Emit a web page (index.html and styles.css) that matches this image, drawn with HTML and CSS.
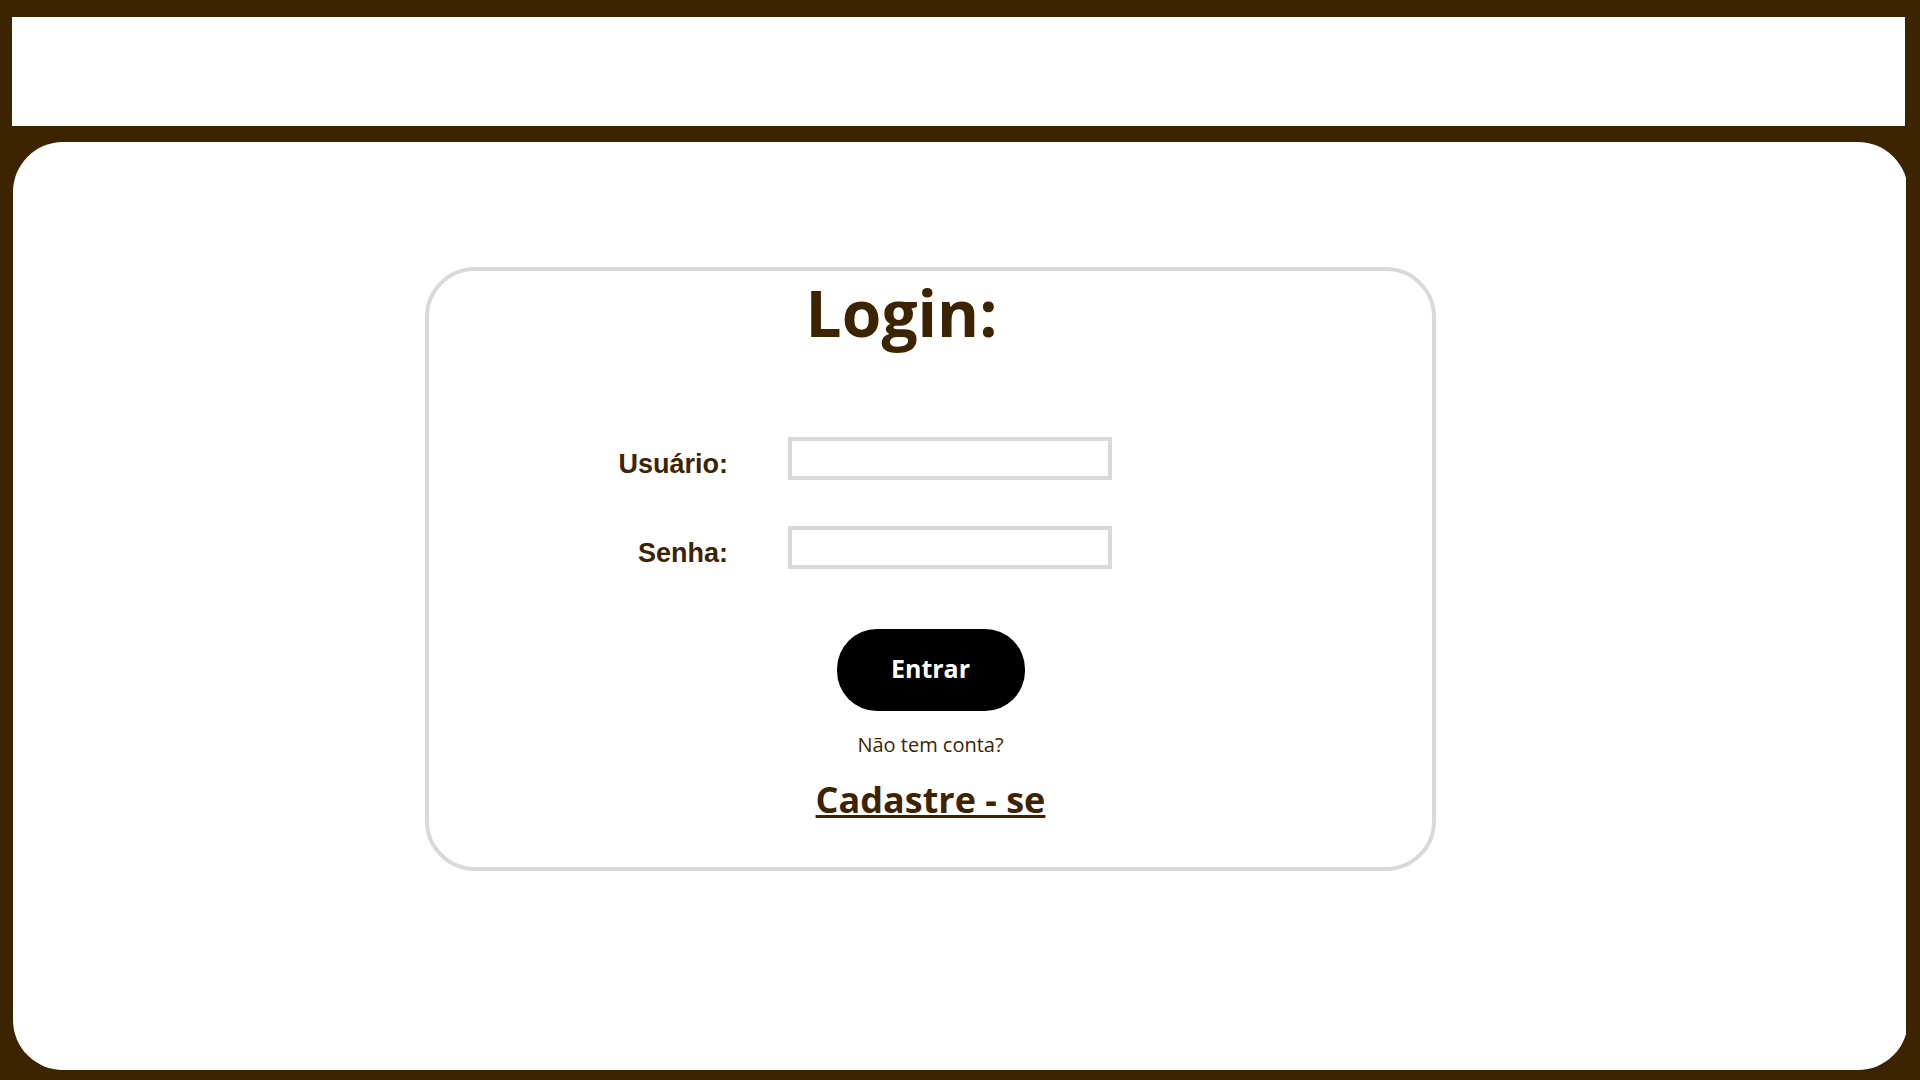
FILE: index.html
```html
<!DOCTYPE html>
<html lang="pt-BR">
<head>
<meta charset="utf-8">
<meta name="viewport" content="width=device-width, initial-scale=1">
<title>Login</title>
<link rel="stylesheet" href="styles.css">
</head>
<body>
<header class="topbar"></header>
<main class="content">
  <div class="panel">
    <form class="card">
      <h1 class="title">Login:</h1>
      <div class="fields">
        <label class="label" for="usuario">Usuário:</label>
        <input class="input" id="usuario" type="text">
        <label class="label" for="senha">Senha:</label>
        <input class="input" id="senha" type="password">
      </div>
      <button class="submit" type="button">Entrar</button>
      <p class="hint">Não tem conta?</p>
      <a class="register" href="#">Cadastre - se</a>
    </form>
  </div>
</main>
</body>
</html>
```

FILE: styles.css
```css
* {
  box-sizing: border-box;
}

body {
  display: flex;
  flex-direction: column;
  gap: 16px;
  min-height: 100vh;
  margin: 0;
  padding: 17px 14px 10px 12px;
  background: #3d2401;
  color: #3d2401;
  font-family: "Open Sans", sans-serif;
}

.topbar {
  min-height: 109px;
  margin-right: 1px;
  background: #fff;
}

.content {
  display: flex;
  flex: 1;
  margin-left: 1px;
  overflow: hidden;
}

/* The panel runs slightly past the right edge of its frame. */
.panel {
  display: grid;
  flex: 1;
  grid-template-columns: 412fr minmax(auto, 1011px) 472fr;
  align-items: start;
  margin-right: -2px;
  padding: 125px 0;
  border-radius: 50px;
  background: #fff;
}

.card {
  display: flex;
  grid-column: 2;
  flex-direction: column;
  align-items: center;
  padding-bottom: 43px;
  border: 4px solid #d9d9d9;
  border-radius: 50px;
}

.title {
  margin: 0 58px 82px 0;
  font-size: 64px;
  line-height: 84px;
}

.fields {
  display: grid;
  grid-template-columns: 299px 324px;
  align-items: end;
  align-self: start;
  gap: 46px 60px;
}

.label {
  font: bold 27px/32px "Liberation Sans", sans-serif;
  text-align: right;
}

.input {
  width: 100%;
  height: 43px;
  padding: 0 8px;
  border: 4px solid #d9d9d9;
  background: #fff;
  color: inherit;
  font: 20px "Open Sans", sans-serif;
}

.submit {
  width: 188px;
  height: 82px;
  margin-top: 60px;
  padding: 0 0 4px;
  border: 0;
  border-radius: 40px;
  background: #000;
  color: #fff;
  font: bold 25px "Open Sans", sans-serif;
}

.hint {
  margin: 20px 0 17px;
  font-size: 20px;
  line-height: 28px;
}

.register {
  color: inherit;
  font-size: 36px;
  font-weight: bold;
  line-height: 48px;
}
```
